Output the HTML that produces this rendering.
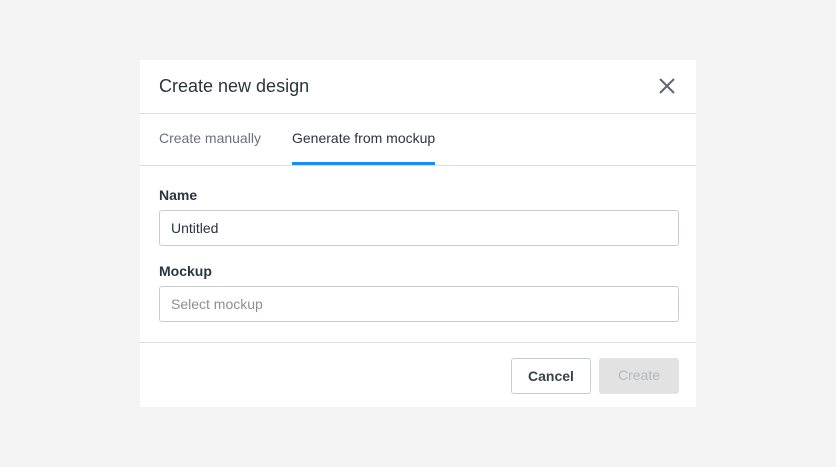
<!DOCTYPE html>
<html><head><style>
*{box-sizing:border-box;margin:0;padding:0}
body{width:836px;height:467px;background:#f4f4f4;font-family:"Liberation Sans",Arial,sans-serif;position:relative;overflow:hidden}
.d{position:absolute;left:140px;top:60px;width:556px;height:347px;background:#fff}
.a{position:absolute}
.t{left:19px;top:16px;font-size:18px;color:#2b3440}
.hl{left:0;width:556px;height:1px;background:#dcdfe3}
.tab{top:70px;font-size:14px}
.lbl{left:19px;font-size:14px;color:#2b3440;font-weight:bold}
.in{left:19px;width:520px;height:36px;border:1px solid #c8ccd1;border-radius:3px;font-size:14px;padding:9px 11px}
.btn{top:298px;height:36px;width:80px;border-radius:3px;font-size:14px;text-align:center;line-height:34px;font-weight:bold}
</style></head><body>
<div class="d">
<div class="a t">Create new design</div>
<svg class="a" style="left:518px;top:17px" width="18" height="18" viewBox="0 0 18 18"><path d="M2 2L16 16M16 2L2 16" stroke="#5f6670" stroke-width="2"/></svg>
<div class="a hl" style="top:53px"></div>
<div class="a tab" style="left:19px;color:#6b7280">Create manually</div>
<div class="a tab" style="left:152px;color:#2b3440">Generate from mockup</div>
<div class="a" style="left:152px;top:102px;width:143px;height:3px;background:#1a8cff"></div>
<div class="a hl" style="top:105px"></div>
<div class="a lbl" style="top:127px">Name</div>
<div class="a in" style="top:150px;color:#2b3440">Untitled</div>
<div class="a lbl" style="top:203px">Mockup</div>
<div class="a in" style="top:226px;color:#8a9099">Select mockup</div>
<div class="a hl" style="top:282px"></div>
<div class="a btn" style="left:371px;border:1px solid #c8ccd1;color:#3a424d">Cancel</div>
<div class="a btn" style="left:459px;background:#e2e2e2;color:#b5b8bc;font-weight:normal">Create</div>
</div>
</body></html>
